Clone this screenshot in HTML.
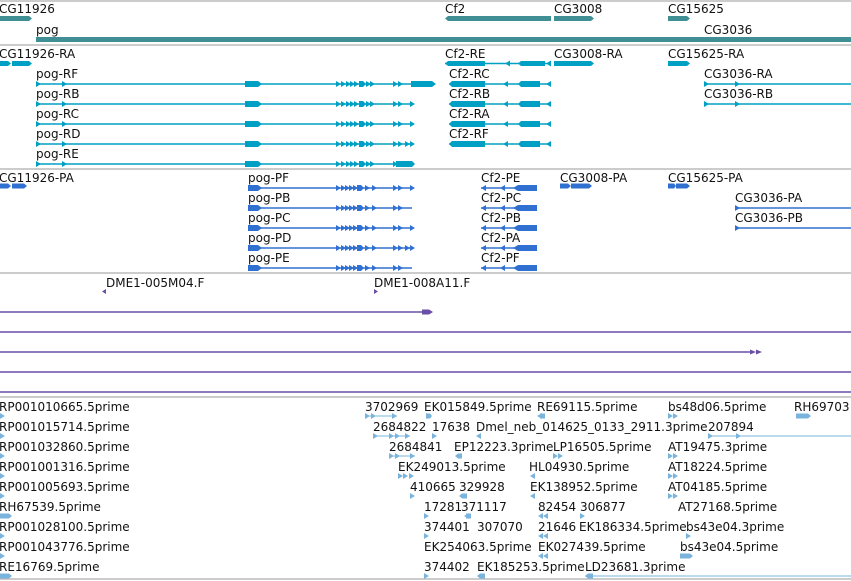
<!DOCTYPE html>
<html><head><meta charset="utf-8"><style>
html,body{margin:0;padding:0;background:#fff;width:851px;height:581px;overflow:hidden}
svg{display:block}
text{font-family:"DejaVu Sans","Liberation Sans",sans-serif;font-size:12px;fill:#111}
</style></head><body>
<svg width="851" height="581" viewBox="0 0 851 581" xmlns="http://www.w3.org/2000/svg">
<defs>
<g id="tri"><polygon points="0,-3 5,0 0,3"/></g>
<g id="tril"><polygon points="5,-3 0,0 5,3"/></g>
<g id="pogT" fill="#00a0c4">
<line x1="36" y1="0" x2="411" y2="0" stroke="#00a0c4" stroke-width="1.5"/>
<use href="#tri" x="36"/><use href="#tri" x="62"/>
<polygon points="245,-3 258,-3 262,0 258,3 245,3"/>
<use href="#tri" x="336"/><use href="#tri" x="341"/><use href="#tri" x="346"/><use href="#tri" x="350"/><use href="#tri" x="354"/>
<polygon points="359,-3 363,-3 366,0 363,3 359,3"/><use href="#tri" x="366"/>
<use href="#tri" x="370"/><use href="#tri" x="393"/><use href="#tri" x="398"/>
</g>
<g id="cf2T" fill="#00a0c4">
<line x1="449" y1="0" x2="550" y2="0" stroke="#00a0c4" stroke-width="1.5"/>
<polygon points="449,0 452,-3 485,-3 485,3 452,3"/>
<use href="#tril" x="503"/>
<polygon points="518,0 521,-3 540,-3 540,3 521,3"/>
<use href="#tril" x="546"/>
</g>
<g id="pogP" fill="#3070d0">
<line x1="248" y1="0" x2="412" y2="0" stroke="#3070d0" stroke-width="1.5"/>
<polygon points="248,-3 258,-3 262,0 258,3 248,3"/>
<use href="#tri" x="336"/><use href="#tri" x="341"/><use href="#tri" x="345"/><use href="#tri" x="349"/><use href="#tri" x="353"/>
<polygon points="357,-3 361,-3 364,0 361,3 357,3"/><use href="#tri" x="365"/><use href="#tri" x="372"/>
<use href="#tri" x="393"/><use href="#tri" x="398"/>
</g>
<g id="cf2P" fill="#3070d0">
<line x1="481" y1="0" x2="518" y2="0" stroke="#3070d0" stroke-width="1.5"/>
<use href="#tril" x="481"/><use href="#tril" x="500"/>
<polygon points="513,0 518,-3 537,-3 537,3 518,3"/>
</g>
</defs>
<g stroke="#bbb" stroke-width="1.5">
<line x1="0" y1="1" x2="851" y2="1"/><line x1="0" y1="45" x2="851" y2="45"/>
<line x1="0" y1="169" x2="851" y2="169"/><line x1="0" y1="273" x2="851" y2="273"/>
<line x1="0" y1="397" x2="851" y2="397"/><line x1="0" y1="579" x2="851" y2="579"/>
</g>
<!-- genes -->
<g fill="#3f8f94">
<polygon points="0,16 29,16 32,18.5 29,21 0,21"/>
<rect x="36" y="37" width="815" height="5"/>
<polygon points="445,18.5 448,16 551,16 551,21 448,21"/>
<polygon points="554,16 591,16 594,18.5 591,21 554,21"/>
<polygon points="668,16 687,16 690,18.5 687,21 668,21"/>
<rect x="704" y="37" width="147" height="5"/>
</g>
<text x="-1" y="13">CG11926</text><text x="36" y="34">pog</text>
<text x="445" y="13">Cf2</text><text x="554" y="13">CG3008</text>
<text x="668" y="13">CG15625</text><text x="704" y="34">CG3036</text>
<!-- transcripts -->
<g fill="#00a0c4">
<polygon points="0,61 8,61 11,63.5 8,66 0,66"/><polygon points="12,61 29,61 32,63.5 29,66 12,66"/>
<line x1="445" y1="63.5" x2="551" y2="63.5" stroke="#00a0c4" stroke-width="1.5"/>
<polygon points="445,63.5 448,61 485,61 485,66 448,66"/><use href="#tril" x="505" y="63.5"/>
<polygon points="518,63.5 521,61 545,61 545,66 521,66"/><use href="#tril" x="546" y="63.5"/>
<polygon points="554,61 572,61 575,63.5 572,66 554,66"/><polygon points="572,61 591,61 594,63.5 591,66 572,66"/>
<polygon points="668,61 687,61 690,63.5 687,66 668,66"/>
<rect x="411" y="81" width="21" height="6"/>
<line x1="704" y1="84" x2="851" y2="84" stroke="#00a0c4" stroke-width="1.5"/><use href="#tri" x="704" y="84"/><use href="#tri" x="735" y="84"/>
<line x1="704" y1="104" x2="851" y2="104" stroke="#00a0c4" stroke-width="1.5"/><use href="#tri" x="704" y="104"/><use href="#tri" x="735" y="104"/>
<polygon points="420,81 432,81 436,84 432,87 420,87"/>
</g>
<use href="#pogT" y="84"/><use href="#pogT" y="104"/><use href="#pogT" y="124"/><use href="#pogT" y="144"/><use href="#pogT" y="164"/>
<use href="#cf2T" y="84"/><use href="#cf2T" y="104"/><use href="#cf2T" y="124"/><use href="#cf2T" y="144"/>
<g fill="#00a0c4"><use href="#tri" x="410" y="104"/><use href="#tri" x="410" y="124"/><use href="#tri" x="405" y="144"/><use href="#tri" x="410" y="144"/><polygon points="396,161 412,161 415,164 412,167 396,167"/></g>
<text x="-1" y="58">CG11926-RA</text>
<text x="36" y="78">pog-RF</text><text x="36" y="98">pog-RB</text><text x="36" y="118">pog-RC</text><text x="36" y="138">pog-RD</text><text x="36" y="158">pog-RE</text>
<text x="445" y="58">Cf2-RE</text><text x="449" y="78">Cf2-RC</text><text x="449" y="98">Cf2-RB</text><text x="449" y="118">Cf2-RA</text><text x="449" y="138">Cf2-RF</text>
<text x="554" y="58">CG3008-RA</text><text x="668" y="58">CG15625-RA</text>
<text x="704" y="78">CG3036-RA</text><text x="704" y="98">CG3036-RB</text>
<!-- proteins -->
<use href="#pogP" y="188"/><use href="#pogP" y="208"/><use href="#pogP" y="228"/><use href="#pogP" y="248"/><use href="#pogP" y="268"/>
<use href="#cf2P" y="188"/><use href="#cf2P" y="208"/><use href="#cf2P" y="228"/><use href="#cf2P" y="248"/><use href="#cf2P" y="268"/>
<g fill="#3070d0">
<use href="#tri" x="410" y="188"/><use href="#tri" x="410" y="228"/><use href="#tri" x="405" y="248"/><use href="#tri" x="410" y="248"/>
<polygon points="0,183.5 8,183.5 11,186 8,188.5 0,188.5"/><polygon points="12,183.5 24,183.5 27,186 24,188.5 12,188.5"/>
<polygon points="560,183.5 568,183.5 571,186 568,188.5 560,188.5"/><polygon points="571,183.5 589,183.5 592,186 589,188.5 571,188.5"/>
<polygon points="668,183.5 674,183.5 676,186 674,188.5 668,188.5"/><polygon points="676,183.5 687,183.5 690,186 687,188.5 676,188.5"/>
<line x1="735" y1="208" x2="851" y2="208" stroke="#3070d0" stroke-width="1.5"/><use href="#tri" x="735" y="208"/>
<line x1="735" y1="228" x2="851" y2="228" stroke="#3070d0" stroke-width="1.5"/><use href="#tri" x="735" y="228"/>
</g>
<text x="-1" y="182">CG11926-PA</text>
<text x="248" y="182">pog-PF</text><text x="248" y="202">pog-PB</text><text x="248" y="222">pog-PC</text><text x="248" y="242">pog-PD</text><text x="248" y="262">pog-PE</text>
<text x="481" y="182">Cf2-PE</text><text x="481" y="202">Cf2-PC</text><text x="481" y="222">Cf2-PB</text><text x="481" y="242">Cf2-PA</text><text x="481" y="262">Cf2-PF</text>
<text x="560" y="182">CG3008-PA</text><text x="668" y="182">CG15625-PA</text>
<text x="735" y="202">CG3036-PA</text><text x="735" y="222">CG3036-PB</text>
<!-- purple -->
<text x="106" y="287">DME1-005M04.F</text><text x="374" y="287">DME1-008A11.F</text>
<g fill="#6a4fa8" stroke="#6a4fa8" stroke-width="1.5">
<polygon points="102,291.5 106,289 106,294" stroke="none"/>
<polygon points="374,289 378,291.5 374,294" stroke="none"/>
<line x1="0" y1="312" x2="425" y2="312"/>
<polygon points="422,309.5 429,309.5 433,312 429,314.5 422,314.5" stroke="none"/>
<line x1="0" y1="332" x2="851" y2="332"/>
<line x1="0" y1="352" x2="752" y2="352"/>
<polygon points="750,349.5 756,352 750,354.5" stroke="none"/><polygon points="756,349.5 762,352 756,354.5" stroke="none"/>
<line x1="0" y1="372" x2="851" y2="372"/>
<line x1="0" y1="392" x2="851" y2="392"/>
</g>
<!-- ESTs -->
<g fill="#7ab4dc">
<use href="#tri" x="0" y="416"/><use href="#tri" x="0" y="436"/><use href="#tri" x="0" y="456"/><use href="#tri" x="0" y="476"/><use href="#tri" x="0" y="496"/>
<polygon points="0,513.5 9,513.5 12,516 9,518.5 0,518.5"/><use href="#tri" x="0" y="536"/><use href="#tri" x="0" y="556"/>
<polygon points="0,573.5 9,573.5 12,576 9,578.5 0,578.5"/>
<line x1="365" y1="416" x2="397" y2="416" stroke="#7ab4dc"/><use href="#tri" x="365" y="416"/><use href="#tri" x="371" y="416"/><use href="#tri" x="392" y="416"/>
<use href="#tri" x="426" y="416"/><polygon points="426,413.5 430,413.5 432,416 430,418.5 426,418.5"/>
<use href="#tril" x="537" y="416"/><polygon points="540,413.5 545,413.5 545,418.5 540,418.5"/>
<use href="#tri" x="668" y="416"/><use href="#tri" x="673" y="416"/>
<polygon points="796,413.5 808,413.5 811,416 808,418.5 796,418.5"/>
<line x1="373" y1="436" x2="410" y2="436" stroke="#7ab4dc"/><use href="#tri" x="373" y="436"/><use href="#tri" x="389" y="436"/><use href="#tri" x="395" y="436"/><use href="#tri" x="405" y="436"/>
<use href="#tri" x="432" y="436"/><use href="#tril" x="476" y="436"/>
<line x1="708" y1="436" x2="851" y2="436" stroke="#7ab4dc"/><use href="#tri" x="708" y="436"/><use href="#tri" x="736" y="436"/>
<line x1="389" y1="456" x2="415" y2="456" stroke="#7ab4dc"/><use href="#tri" x="389" y="456"/><use href="#tri" x="395" y="456"/><use href="#tri" x="410" y="456"/>
<polygon points="455,456 458,453.5 462,453.5 462,458.5 458,458.5"/>
<use href="#tri" x="553" y="456"/><use href="#tri" x="558" y="456"/><use href="#tri" x="668" y="456"/><use href="#tri" x="673" y="456"/>
<use href="#tri" x="398" y="476"/><use href="#tri" x="403" y="476"/><use href="#tri" x="409" y="476"/>
<use href="#tril" x="530" y="476"/><use href="#tri" x="668" y="476"/><use href="#tri" x="673" y="476"/>
<use href="#tri" x="410" y="496"/><polygon points="459,496 462,493.5 467,493.5 467,498.5 462,498.5"/>
<use href="#tril" x="530" y="496"/><use href="#tri" x="668" y="496"/><use href="#tri" x="673" y="496"/>
<use href="#tri" x="424" y="516"/><use href="#tril" x="464" y="516"/><polygon points="466,513.5 471,513.5 471,518.5 466,518.5"/>
<use href="#tril" x="538" y="516"/><use href="#tril" x="543" y="516"/><use href="#tri" x="580" y="516"/>
<use href="#tri" x="424" y="536"/><use href="#tril" x="538" y="536"/><use href="#tril" x="543" y="536"/><use href="#tri" x="686" y="536"/>
<use href="#tril" x="538" y="556"/><use href="#tril" x="543" y="556"/>
<polygon points="680,553.5 690,553.5 693,556 690,558.5 680,558.5"/>
<use href="#tri" x="424" y="576"/><polygon points="477,576 480,573.5 485,573.5 485,578.5 480,578.5"/>
<line x1="585" y1="576" x2="851" y2="576" stroke="#7ab4dc"/><polygon points="585,576 588,573.5 593,573.5 593,578.5 588,578.5"/>
</g>
<text x="-1" y="411">RP001010665.5prime</text><text x="-1" y="431">RP001015714.5prime</text>
<text x="-1" y="451">RP001032860.5prime</text><text x="-1" y="471">RP001001316.5prime</text>
<text x="-1" y="491">RP001005693.5prime</text><text x="-1" y="511">RH67539.5prime</text>
<text x="-1" y="531">RP001028100.5prime</text><text x="-1" y="551">RP001043776.5prime</text>
<text x="-1" y="571">RE16769.5prime</text>
<text x="365" y="411">3702969</text><text x="424" y="411">EK015849.5prime</text><text x="537" y="411">RE69115.5prime</text><text x="668" y="411">bs48d06.5prime</text><text x="794" y="411">RH69703</text>
<text x="373" y="431">2684822</text><text x="432" y="431">17638</text><text x="476" y="431">Dmel_neb_014625_0133_2911.3prime</text><text x="708" y="431">207894</text>
<text x="389" y="451">2684841</text><text x="454" y="451">EP12223.3prime</text><text x="553" y="451">LP16505.5prime</text><text x="668" y="451">AT19475.3prime</text>
<text x="398" y="471">EK249013.5prime</text><text x="529" y="471">HL04930.5prime</text><text x="668" y="471">AT18224.5prime</text>
<text x="410" y="491">410665</text><text x="459" y="491">329928</text><text x="530" y="491">EK138952.5prime</text><text x="668" y="491">AT04185.5prime</text>
<text x="424" y="511">17281</text><text x="461" y="511">371117</text><text x="538" y="511">82454</text><text x="580" y="511">306877</text><text x="678" y="511">AT27168.5prime</text>
<text x="424" y="531">374401</text><text x="477" y="531">307070</text><text x="538" y="531">21646</text><text x="579" y="531">EK186334.5prime</text><text x="686" y="531">bs43e04.3prime</text>
<text x="424" y="551">EK254063.5prime</text><text x="538" y="551">EK027439.5prime</text><text x="680" y="551">bs43e04.5prime</text>
<text x="424" y="571">374402</text><text x="477" y="571">EK185253.5prime</text><text x="585" y="571">LD23681.3prime</text>
</svg>
</body></html>
